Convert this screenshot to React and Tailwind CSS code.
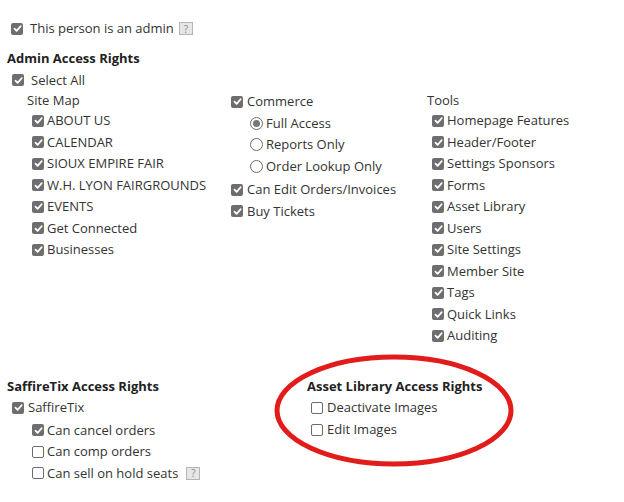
import React from "react";

function Box({ checked }) {
  if (!checked) {
    return (
      <span className="inline-block w-[12px] h-[12px] shrink-0 rounded-[2px] border border-[#6b6b6b] bg-white" />
    );
  }
  return (
    <span className="inline-flex w-[12px] h-[12px] shrink-0 items-center justify-center rounded-[2px] bg-[#6e6e6e]">
      <svg width="9" height="9" viewBox="0 0 10 10">
        <path d="M1.6 5.2 L4 7.6 L8.6 2.4" fill="none" stroke="#fff" strokeWidth="1.9" strokeLinecap="round" strokeLinejoin="round" />
      </svg>
    </span>
  );
}

function Radio({ checked }) {
  return (
    <span className="inline-flex w-[13px] h-[13px] shrink-0 items-center justify-center rounded-full border border-[#6b6b6b] bg-white">
      {checked && <span className="w-[7px] h-[7px] rounded-full bg-[#777]" />}
    </span>
  );
}

function Help({ className = "" }) {
  return (
    <span className={`inline-flex w-[14px] h-[13px] items-center justify-center border border-[#b5b5b5] bg-[#e6e6e6] text-[10px] leading-none text-[#8a8a8a] ${className}`}>
      ?
    </span>
  );
}

function Item({ label, checked = true, gap = "gap-[3px]", h = "h-[21.5px]" }) {
  return (
    <div className={`flex ${h} items-center ${gap}`}>
      <Box checked={checked} />
      <span>{label}</span>
    </div>
  );
}

const siteMap = [
  "ABOUT US",
  "CALENDAR",
  "SIOUX EMPIRE FAIR",
  "W.H. LYON FAIRGROUNDS",
  "EVENTS",
  "Get Connected",
  "Businesses",
];

const tools = [
  "Homepage Features",
  "Header/Footer",
  "Settings Sponsors",
  "Forms",
  "Asset Library",
  "Users",
  "Site Settings",
  "Member Site",
  "Tags",
  "Quick Links",
  "Auditing",
];

export default function App() {
  return (
    <div className="relative w-[624px] h-[502px] overflow-hidden bg-white font-['Open_Sans',sans-serif] text-[13px] text-[#333]">
      {/* admin toggle */}
      <div className="pt-[17.5px] pl-[11px]">
        <div className="flex h-[22px] items-center gap-[7px]">
          <Box checked />
          <span>This person is an admin</span>
          <Help className="-ml-[2px]" />
        </div>
      </div>

      {/* Admin Access Rights */}
      <div className="mt-[7.5px] pl-[7px]">
        <h2 className="h-[22.5px] flex items-center text-[13px] font-bold text-[#222]">Admin Access Rights</h2>
        <div className="pl-[5px]">
          <Item label="Select All" gap="gap-[7px]" />
        </div>

        <div className="flex pl-[20px]">
          <div className="w-[204px]">
            <div className="h-[19px] flex items-center">Site Map</div>
            <div className="pl-[5px]">
              {siteMap.map((s) => (
                <Item key={s} label={s} />
              ))}
            </div>
          </div>

          <div className="w-[196px]">
            <Item label="Commerce" gap="gap-[4px]" />
            <div className="pl-[19px]">
              {[
                ["Full Access", true],
                ["Reports Only", false],
                ["Order Lookup Only", false],
              ].map(([l, c]) => (
                <div key={l} className="flex h-[21.5px] items-center gap-[3px]">
                  <Radio checked={c} />
                  <span>{l}</span>
                </div>
              ))}
            </div>
            <div className="mt-[2px]">
              <Item label="Can Edit Orders/Invoices" gap="gap-[4px]" />
              <Item label="Buy Tickets" gap="gap-[4px]" />
            </div>
          </div>

          <div className="flex-1">
            <div className="h-[19px] flex items-center">Tools</div>
            <div className="pl-[5px]">
              {tools.map((t) => (
                <Item key={t} label={t} />
              ))}
            </div>
          </div>
        </div>
      </div>

      {/* bottom sections */}
      <div className="mt-[30.5px] grid grid-cols-[300px_1fr] pl-[7px]">
        <div>
          <h2 className="h-[20px] flex items-center text-[13px] font-bold text-[#222]">SaffireTix Access Rights</h2>
          <div className="pl-[5px]">
            <Item label="SaffireTix" gap="gap-[4px]" />
            <div className="pl-[20px] pt-[1px]">
              <Item label="Can cancel orders" />
              <Item label="Can comp orders" checked={false} />
              <div className="flex h-[21.5px] items-center gap-[3px]">
                <Box checked={false} />
                <span className="mr-[5px]">Can sell on hold seats</span>
                <Help />
              </div>
            </div>
          </div>
        </div>
        <div>
          <h2 className="h-[20px] flex items-center text-[13px] font-bold text-[#222]">Asset Library Access Rights</h2>
          <div className="pl-[4px]">
            <Item label="Deactivate Images" checked={false} gap="gap-[4px]" h="h-[22px]" />
            <Item label="Edit Images" checked={false} gap="gap-[4px]" h="h-[22px]" />
          </div>
        </div>
      </div>

      {/* red annotation */}
      <svg className="pointer-events-none absolute left-0 top-0" width="624" height="502">
        <ellipse cx="394" cy="410.5" rx="117" ry="53.5" fill="none" stroke="#e21b1b" strokeWidth="5" />
      </svg>
    </div>
  );
}
